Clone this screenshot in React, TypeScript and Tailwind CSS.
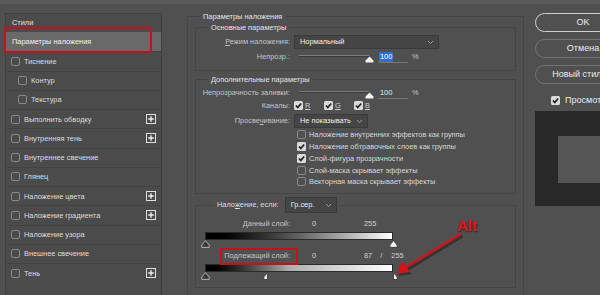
import React from 'react';

type Row = { t: string; ind?: boolean; plus?: boolean };

const styleRows: Row[] = [
  { t: 'Тиснение' },
  { t: 'Контур', ind: true },
  { t: 'Текстура', ind: true },
  { t: 'Выполнить обводку', plus: true },
  { t: 'Внутренняя тень', plus: true },
  { t: 'Внутреннее свечение' },
  { t: 'Глянец' },
  { t: 'Наложение цвета', plus: true },
  { t: 'Наложение градиента', plus: true },
  { t: 'Наложение узора' },
  { t: 'Внешнее свечение' },
  { t: 'Тень', plus: true },
];

const Check: React.FC<{ on?: boolean; className?: string }> = ({ on, className = '' }) =>
  on ? (
    <svg width="9" height="9" viewBox="0 0 9 9" className={`shrink-0 ${className}`}>
      <rect x="0" y="0" width="9" height="9" rx="1.5" fill="#dadada" />
      <path d="M1.9 4.5 L3.8 6.4 L7.2 2.5" stroke="#262626" strokeWidth="1.7" fill="none" />
    </svg>
  ) : (
    <span className={`inline-block shrink-0 w-[9px] h-[9px] rounded-[2px] border border-[#8a8a8a] ${className}`} />
  );

const Plus = () => (
  <svg width="10" height="10" viewBox="0 0 10 10" className="ml-auto mr-[5px] shrink-0">
    <rect x="0.5" y="0.5" width="9" height="9" fill="#4a4a4a" stroke="#e0e0e0" />
    <path d="M5 2.2 V7.8 M2.2 5 H7.8" stroke="#f0f0f0" strokeWidth="1.4" />
  </svg>
);

const Chevron = () => (
  <svg width="7" height="5" viewBox="0 0 7 5" className="ml-auto mr-[4px] shrink-0">
    <path d="M1 1 L3.5 3.5 L6 1" stroke="#9a9a9a" strokeWidth="1" fill="none" />
  </svg>
);

const Thumb: React.FC<{ dark?: boolean; half?: 'l' | 'r'; className?: string }> = ({ dark, half, className = '' }) => (
  <svg width="9" height="8" viewBox="0 0 9 8" className={className}>
    {half === 'l' ? (
      <path d="M4.5 0.5 L4.5 7.5 L0.8 7.5 L0.8 5 Z" fill="#f2f2f2" stroke="#2e2e2e" strokeWidth="0.8" />
    ) : half === 'r' ? (
      <path d="M4.5 0.5 L8.2 5 L8.2 7.5 L4.5 7.5 Z" fill="#f2f2f2" stroke="#2e2e2e" strokeWidth="0.8" />
    ) : (
      <path
        d="M4.5 0.6 L8.2 5 L8.2 7.4 L0.8 7.4 L0.8 5 Z"
        fill={dark ? '#3a3a3a' : '#f2f2f2'}
        stroke={dark ? '#bdbdbd' : '#2e2e2e'}
        strokeWidth="0.9"
      />
    )}
  </svg>
);

const Slider: React.FC<{ sel?: boolean }> = ({ sel }) => (
  <div className="flex items-center">
    <div className="relative w-[70px] h-[12px] ml-[6px]">
      <div className="absolute left-0 right-0 top-[4px] h-[2px] bg-[#7c7c7c] border-b border-[#3a3a3a]" />
      <svg width="9" height="7" viewBox="0 0 9 7" className="absolute right-[-5px] top-[5px]">
        <path d="M4.5 0.4 L8.4 4.6 L8.4 6.6 L0.6 6.6 L0.6 4.6 Z" fill="#f4f4f4" />
      </svg>
    </div>
    <div className="ml-[9px] w-[30px] h-[12px] border-b border-[#777] flex items-center">
      <span className={`ml-[1px] px-[1px] leading-[10px] ${sel ? 'bg-[#2f6fd0] text-white' : 'text-[#e8e8e8]'}`}>100</span>
    </div>
    <span className="ml-[4px] text-[#c8c8c8]">%</span>
  </div>
);

const Label: React.FC<{ children: React.ReactNode }> = ({ children }) => (
  <div className="w-[97px] shrink-0 flex justify-end pr-[3px] whitespace-nowrap text-[#c4c4c4]">
    <span>{children}</span>
  </div>
);

export default function App() {
  return (
    <div className="relative w-[600px] h-[295px] overflow-hidden bg-[#505050] font-['Liberation_Sans',Arial,sans-serif] text-[7.4px] text-[#d0d0d0] flex flex-col">
      <div className="h-[4px] bg-[#5a5a5a] shrink-0" />
      <div className="flex flex-row flex-1">
        {/* styles list */}
        <div className="shrink-0 mt-[9px] ml-[5px] w-[157px] h-[290px] bg-[#4b4b4b] border border-[#404040] flex flex-col">
          <div className="h-[18px] flex items-center pl-[6px] text-[#e2e2e2]">Стили</div>
          <div className="h-[19.25px] flex items-center pl-[6px] bg-[#696969] text-[#f2f2f2]">Параметры наложения</div>
          {styleRows.map((r) => (
            <div key={r.t} className="h-[19.25px] flex items-center border-t border-[#424242] text-[#dedede]">
              <Check className={r.ind ? 'ml-[12px]' : 'ml-[5px]'} />
              <span className="ml-[4px]">{r.t}</span>
              {r.plus && <Plus />}
            </div>
          ))}
        </div>

        {/* blending options */}
        <div className="shrink-0 mt-[12px] ml-[25px] w-[337px] border-l border-t border-r border-[#454545] flex flex-col">
          <div className="-mt-[6px] ml-[12px] w-fit px-[3px] bg-[#505050] leading-[11px] text-[#e4e4e4]">Параметры наложения</div>

          <div className="mt-[5px] ml-[7px] w-[321px] h-[44px] border border-[#454545] flex flex-col">
            <div className="-mt-[6px] ml-[12px] w-fit px-[3px] bg-[#505050] leading-[11px] text-[#e4e4e4]">Основные параметры</div>
            <div className="mt-[2px] h-[14px] flex items-center">
              <Label>
                <u>Р</u>ежим наложения:
              </Label>
              <div className="ml-[1px] w-[145px] h-[14px] bg-[#454545] border border-[#3a3a3a] flex items-center">
                <span className="ml-[5px] text-[#f0f0f0]">Нормальный</span>
                <Chevron />
              </div>
            </div>
            <div className="mt-[2px] h-[12px] flex items-center">
              <Label>Непрозр.:</Label>
              <Slider sel />
            </div>
          </div>

          <div className="mt-[8px] ml-[7px] w-[321px] h-[115px] border border-[#454545] flex flex-col">
            <div className="-mt-[6px] ml-[12px] w-fit px-[3px] bg-[#505050] leading-[11px] text-[#e4e4e4]">Дополнительные параметры</div>
            <div className="mt-[2px] h-[12px] flex items-center">
              <Label>Непрозрачность заливки:</Label>
              <Slider />
            </div>
            <div className="mt-[1px] h-[11px] flex items-center">
              <Label>Каналы:</Label>
              <Check on className="ml-[1px]" />
              <u className="ml-[2px] w-[19px]">R</u>
              <Check on />
              <u className="ml-[2px] w-[19px]">G</u>
              <Check on />
              <u className="ml-[2px]">B</u>
            </div>
            <div className="mt-[3px] h-[14px] flex items-center">
              <Label>
                Просве<u>ч</u>ивание:
              </Label>
              <div className="ml-[1px] w-[74px] h-[14px] bg-[#454545] border border-[#3a3a3a] flex items-center">
                <span className="ml-[5px] text-[#f0f0f0]">Не показывать</span>
                <Chevron />
              </div>
            </div>
            <div className="mt-[1px] ml-[101px] flex flex-col text-[#d8d8d8]">
              {[
                [false, 'Наложение внутренних эффектов как группы'],
                [true, 'Наложение обтравочных слоев как группы'],
                [true, 'Слой-фигура прозрачности'],
                [false, 'Слой-маска скрывает эффекты'],
                [false, 'Векторная маска скрывает эффекты'],
              ].map(([on, t]) => (
                <div key={t as string} className="h-[11.75px] flex items-center">
                  <Check on={on as boolean} />
                  <span className="ml-[3px]">{t as string}</span>
                </div>
              ))}
            </div>
          </div>

          <div className="mt-[11px] ml-[7px] w-[321px] h-[83px] border border-[#454545] flex flex-col">
            <div className="-mt-[9px] ml-[18px] w-fit px-[3px] bg-[#505050] h-[16px] flex items-center">
              <span className="text-[#dcdcdc]">
                Нало<u>ж</u>ение, если:
              </span>
              <div className="ml-[6px] w-[52px] h-[16px] bg-[#454545] border border-[#3a3a3a] flex items-center">
                <span className="ml-[5px] text-[#f0f0f0]">Гр.сер.</span>
                <Chevron />
              </div>
            </div>
            <div className="mt-[5px] h-[12px] flex items-center">
              <Label>Данный слой:</Label>
              <span className="ml-[19px] w-[52px]">0</span>
              <span>255</span>
            </div>
            <div className="mt-[2px] ml-[9px] w-[188px] h-[8px] bg-linear-to-r from-black to-white border border-[#2a2a2a]" />
            <div className="relative ml-[9px] w-[188px] h-[8px]">
              <Thumb dark className="absolute left-[-4px] top-0" />
              <Thumb className="absolute right-[-5px] top-0" />
            </div>
            <div className="mt-[2px] h-[12px] flex items-center">
              <Label>Подлежащий слой:</Label>
              <span className="ml-[19px] w-[52px]">0</span>
              <span>87</span>
              <span className="ml-[8px]">/</span>
              <span className="ml-[9px]">255</span>
            </div>
            <div className="mt-[2px] ml-[9px] w-[188px] h-[8px] bg-linear-to-r from-black via-[#b0b0b0] via-45% to-white border border-[#2a2a2a]" />
            <div className="relative ml-[9px] w-[188px] h-[8px]">
              <Thumb dark className="absolute left-[-4px] top-0" />
              <Thumb half="l" className="absolute left-[58px] top-0" />
              <Thumb half="r" className="absolute right-[-5px] top-0" />
            </div>
          </div>
        </div>

        {/* buttons + preview */}
        <div className="shrink-0 mt-[9px] ml-[11px] w-[96px] flex flex-col text-[9px] text-[#ececec]">
          <div className="h-[19px] rounded-full border-[1.5px] border-[#cfcfcf] flex items-center justify-center">OK</div>
          <div className="mt-[7px] h-[19px] rounded-full border border-[#737373] flex items-center justify-center">Отмена</div>
          <div className="mt-[7px] h-[19px] rounded-full border border-[#737373] flex items-center justify-center whitespace-nowrap">
            Новый стиль...
          </div>
          <div className="mt-[11px] h-[11px] flex items-center">
            <Check on className="ml-[16px]" />
            <span className="ml-[5px]">Просмотр</span>
          </div>
          <div className="mt-[5px] h-[95px] bg-[#282828] pt-[25px] pl-[23px]">
            <div className="w-[80px] h-[47px] bg-[#555555]" />
          </div>
        </div>
      </div>

      {/* annotations */}
      <div className="absolute left-[4px] top-[27px] w-[148px] h-[26px] border-2 border-[#c8101a]" />
      <div className="absolute left-[220px] top-[248px] w-[78px] h-[17px] border-2 border-[#c8101a]" />
      <div className="absolute left-[457px] top-[215px] text-[15px] font-bold text-[#e8121a] [text-shadow:1px_1px_2px_#222]">Alt</div>
      <svg className="absolute left-0 top-0 pointer-events-none" width="600" height="295" viewBox="0 0 600 295">
        <g opacity="0.45" transform="translate(1.5 2)">
          <path d="M461 234 L405 268" stroke="#111" strokeWidth="3" />
          <path d="M397 274 L402 261 L410 272 Z" fill="#111" />
        </g>
        <path d="M461 234 L405 268" stroke="#d4121a" strokeWidth="2.5" />
        <path d="M397 274 L402 261 L410 272 Z" fill="#d4121a" />
      </svg>
    </div>
  );
}
